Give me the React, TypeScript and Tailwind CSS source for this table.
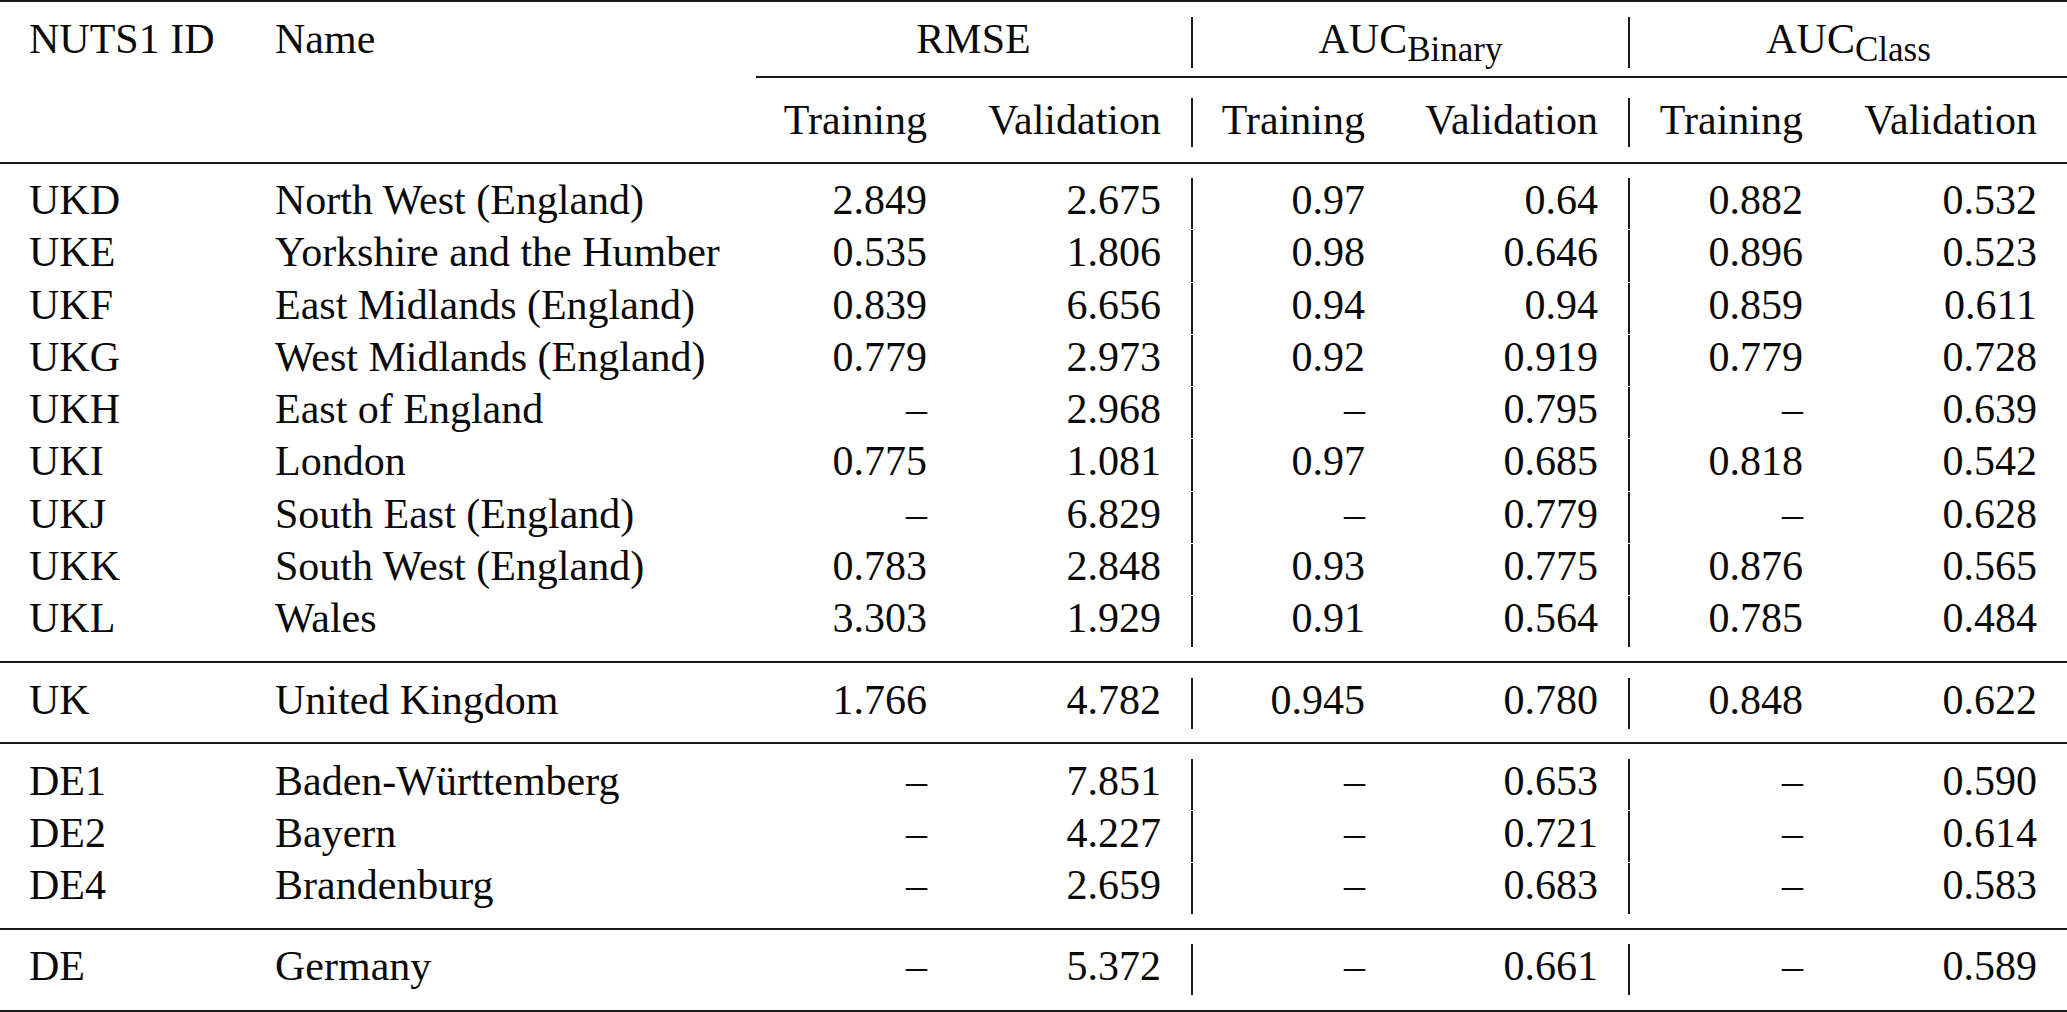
import React from "react";

type Row = [string, string, string, string, string, string, string, string];

const ukRows: Row[] = [
  ["UKD", "North West (England)", "2.849", "2.675", "0.97", "0.64", "0.882", "0.532"],
  ["UKE", "Yorkshire and the Humber", "0.535", "1.806", "0.98", "0.646", "0.896", "0.523"],
  ["UKF", "East Midlands (England)", "0.839", "6.656", "0.94", "0.94", "0.859", "0.611"],
  ["UKG", "West Midlands (England)", "0.779", "2.973", "0.92", "0.919", "0.779", "0.728"],
  ["UKH", "East of England", "–", "2.968", "–", "0.795", "–", "0.639"],
  ["UKI", "London", "0.775", "1.081", "0.97", "0.685", "0.818", "0.542"],
  ["UKJ", "South East (England)", "–", "6.829", "–", "0.779", "–", "0.628"],
  ["UKK", "South West (England)", "0.783", "2.848", "0.93", "0.775", "0.876", "0.565"],
  ["UKL", "Wales", "3.303", "1.929", "0.91", "0.564", "0.785", "0.484"],
];

const ukTotal: Row[] = [["UK", "United Kingdom", "1.766", "4.782", "0.945", "0.780", "0.848", "0.622"]];

const deRows: Row[] = [
  ["DE1", "Baden-Württemberg", "–", "7.851", "–", "0.653", "–", "0.590"],
  ["DE2", "Bayern", "–", "4.227", "–", "0.721", "–", "0.614"],
  ["DE4", "Brandenburg", "–", "2.659", "–", "0.683", "–", "0.583"],
];

const deTotal: Row[] = [["DE", "Germany", "–", "5.372", "–", "0.661", "–", "0.589"]];

const GRID = "grid grid-cols-[245px_511px_201px_234px_204px_233px_205px_234px]";

function Cells({ r }: { r: Row }) {
  return (
    <>
      <div className="pl-[29px] whitespace-nowrap">{r[0]}</div>
      <div className="pl-[30px] whitespace-nowrap">{r[1]}</div>
      <div className="pr-[30px] text-right">{r[2]}</div>
      <div className="pr-[30px] text-right">{r[3]}</div>
      <div className="pr-[30px] text-right border-l-2 border-[#1a1a1a]">{r[4]}</div>
      <div className="pr-[30px] text-right">{r[5]}</div>
      <div className="pr-[30px] text-right border-l-2 border-[#1a1a1a]">{r[6]}</div>
      <div className="pr-[30px] text-right">{r[7]}</div>
    </>
  );
}

function Section({ rows, tall, className }: { rows: Row[]; tall?: boolean; className: string }) {
  return (
    <div className={"flex flex-col " + className}>
      {rows.map((r) => (
        <div key={r[0]} className={GRID + (tall ? " h-[52.25px]" : " h-[52px]") + " pt-[1px] leading-[44px]"}>
          <Cells r={r} />
        </div>
      ))}
    </div>
  );
}

function Rule({ className }: { className: string }) {
  return <div className={"h-[2px] w-full bg-[#1a1a1a] " + className} />;
}

export default function App() {
  return (
    <div className="w-[2067px] h-[1012px] overflow-hidden bg-white text-[#0a0a0a] text-[42px] [font-family:Liberation_Serif,serif]">
      <div className="flex flex-col">
        <Rule className="mt-0" />
        {/* header row 1 */}
        <div className={GRID + " mt-[13px] h-[53px] pt-[2px] leading-[44px]"}>
          <div className="pl-[29px] whitespace-nowrap">NUTS1 ID</div>
          <div className="pl-[30px]">Name</div>
          <div className="col-span-2 text-center">RMSE</div>
          <div className="col-span-2 text-center border-l-2 border-[#1a1a1a] whitespace-nowrap">
            AUC<span className="text-[35px] align-[-8px] leading-none">Binary</span>
          </div>
          <div className="col-span-2 text-center border-l-2 border-[#1a1a1a] whitespace-nowrap">
            AUC<span className="text-[35px] align-[-8px] leading-none">Class</span>
          </div>
        </div>
        {/* cmidrule */}
        <div className={GRID + " mt-[8px] h-[2px]"}>
          <div className="col-start-3 col-span-6 h-[2px] bg-[#1a1a1a]" />
        </div>
        {/* header row 2 */}
        <div className={GRID + " mt-[19px] h-[50px] pt-[1px] leading-[44px]"}>
          <Cells r={["", "", "Training", "Validation", "Training", "Validation", "Training", "Validation"]} />
        </div>
        <Rule className="mt-[15px]" />
        <Section rows={ukRows} tall className="mt-[13px]" />
        <Rule className="mt-[14px]" />
        <Section rows={ukTotal} className="mt-[14px]" />
        <Rule className="mt-[13px]" />
        <Section rows={deRows} className="mt-[14px]" />
        <Rule className="mt-[14px]" />
        <Section rows={deTotal} className="mt-[13px]" />
        <Rule className="mt-[15px]" />
      </div>
    </div>
  );
}
